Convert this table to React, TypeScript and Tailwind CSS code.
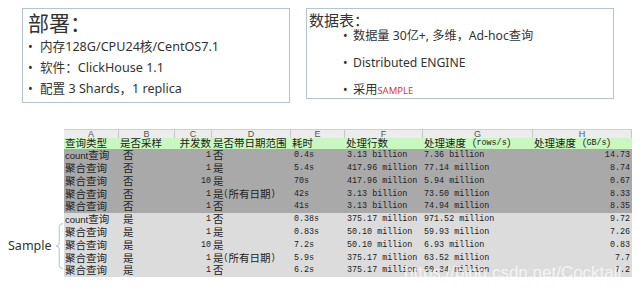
import React from "react";

const CJK = /([\u3000-\u303f\u4e00-\u9fff\uff00-\uffef]+)/;

function Cell({ s }: { s: string }) {
  const parts = s.split(CJK).filter((p) => p.length > 0);
  return (
    <>
      {parts.map((p, i) =>
        CJK.test(p) ? (
          <span key={i} className="text-[10.5px] [font-family:'Noto_Sans_CJK_SC',sans-serif]">
            {p}
          </span>
        ) : p === "count" ? (
          <span key={i} className="text-[9.5px] [font-family:'Liberation_Sans',sans-serif]">
            {p}
          </span>
        ) : (
          <span key={i} className="text-[8.4px] [font-family:'Liberation_Mono',monospace]">
            {p}
          </span>
        )
      )}
    </>
  );
}

const cols = ["A", "B", "C", "D", "E", "F", "G", "H"];
const header = ["查询类型", "是否采样", "并发数", "是否带日期范围", "耗时", "处理行数", "处理速度（rows/s）", "处理速度（GB/s）"];
const rows = [
  ["count查询", "否", "1", "否", "0.4s", "3.13 billion", "7.36 billion", "14.73"],
  ["聚合查询", "否", "1", "是", "5.4s", "417.96 million", "77.14 million", "8.74"],
  ["聚合查询", "否", "10", "是", "70s", "417.96 million", "5.94 million", "0.67"],
  ["聚合查询", "否", "1", "是(所有日期)", "42s", "3.13 billion", "73.50 million", "8.33"],
  ["聚合查询", "否", "1", "否", "41s", "3.13 billion", "74.94 million", "8.35"],
  ["count查询", "是", "1", "否", "0.38s", "375.17 million", "971.52 million", "9.72"],
  ["聚合查询", "是", "1", "是", "0.83s", "50.10 million", "59.93 million", "7.26"],
  ["聚合查询", "是", "10", "是", "7.2s", "50.10 million", "6.93 million", "0.83"],
  ["聚合查询", "是", "1", "是(所有日期)", "5.9s", "375.17 million", "63.52 million", "7.7"],
  ["聚合查询", "是", "1", "否", "6.2s", "375.17 million", "60.34 million", "7.2"],
];
const align = ["justify-start pl-[1px]", "justify-start pl-[4px]", "justify-end pr-[1px]", "justify-start pl-[1px]", "justify-start pl-[3px]", "justify-start pl-[2px]", "justify-start pl-[1px]", "justify-end pr-[2px]"];
const grid = "grid grid-cols-[55px_56px_37px_79px_54px_78px_110px_99px]";

export default function App() {
  return (
    <div className="relative w-[644px] h-[289px] bg-white overflow-hidden text-[#222]">
      <div className="flex items-start pt-[8px]">
        <div className="ml-[22px] w-[268px] h-[95px] border border-[#b4c4d4] px-[5px] [font-family:'Noto_Sans','Noto_Sans_CJK_SC',sans-serif]">
          <div className="text-[21px] leading-[26px] mt-[1px] text-[#333]">部署：</div>
          <div className="flex flex-col text-[12.6px] leading-[21px] text-[#333]">
            <div className="flex"><span className="w-[12px]">•</span><span>内存128G/CPU24核/CentOS7.1</span></div>
            <div className="flex"><span className="w-[12px]">•</span><span>软件：ClickHouse 1.1</span></div>
            <div className="flex"><span className="w-[12px]">•</span><span>配置 3 Shards，1 replica</span></div>
          </div>
        </div>
        <div className="ml-[16px] w-[308px] h-[91px] border border-[#b4c4d4] pl-[2px] [font-family:'Noto_Sans','Noto_Sans_CJK_SC',sans-serif] text-[#333]">
          <div className="text-[15px] leading-[18px] mt-[2px]">数据表：</div>
          <div className="flex flex-col pl-[34px] text-[12.2px] leading-[27px] -mt-[7px]">
            <div className="flex"><span className="w-[10px]">•</span><span>数据量 30亿+, 多维，Ad-hoc查询</span></div>
            <div className="flex"><span className="w-[10px]">•</span><span>Distributed ENGINE</span></div>
            <div className="flex items-baseline"><span className="w-[10px]">•</span><span>采用</span><span className="text-[9.5px] text-[#d83a3a]">SAMPLE</span></div>
          </div>
        </div>
      </div>

      <div className="flex mt-[26px]">
        <div className="w-[64px] shrink-0 flex flex-col">
          <div className="h-[86px]" />
          <div className="flex items-center h-[62px]">
            <span className="ml-[8px] text-[12.5px] [font-family:'Noto_Sans',sans-serif] text-[#333]">Sample</span>
            <svg width="14" height="62" viewBox="0 0 14 62" className="ml-[2px]">
              <path d="M12 1 Q7 1 7 5 L7 27 Q7 31 3 31 Q7 31 7 35 L7 57 Q7 61 12 61" fill="none" stroke="#8fb4cc" strokeWidth="1" />
            </svg>
          </div>
        </div>
        <div className="flex flex-col">
          <div className={`${grid} h-[9px] bg-[#ececec] border-t border-[#d0d0d0]`}>
            {cols.map((c) => (
              <div key={c} className="flex items-center justify-center border-r border-[#c8c8c8] text-[9px] leading-none text-[#555] [font-family:'Liberation_Sans',sans-serif]">
                {c}
              </div>
            ))}
          </div>
          <div className={`${grid} h-[11px] bg-[#c8f7c0]`}>
            {header.map((h, i) => (
              <div key={i} className={`flex items-center whitespace-nowrap leading-none ${i === 2 ? "justify-end pr-[1px]" : "justify-start pl-[1px]"}`}>
                <Cell s={h} />
              </div>
            ))}
          </div>
          {rows.map((r, ri) => (
            <div key={ri} className={`${grid} h-[12.8px] ${ri < 5 ? "bg-[#a9a9a9]" : "bg-[#dcdcdc]"}`}>
              {r.map((v, ci) => (
                <div key={ci} className={`flex items-center whitespace-nowrap leading-none ${align[ci]}`}>
                  <Cell s={v} />
                </div>
              ))}
            </div>
          ))}
        </div>
      </div>

      <div className="absolute left-[404px] top-[260px] text-[17px] text-white/70 [font-family:'Liberation_Sans',sans-serif] whitespace-nowrap">
        https://blog.csdn.net/Cocktail_py
      </div>
    </div>
  );
}
